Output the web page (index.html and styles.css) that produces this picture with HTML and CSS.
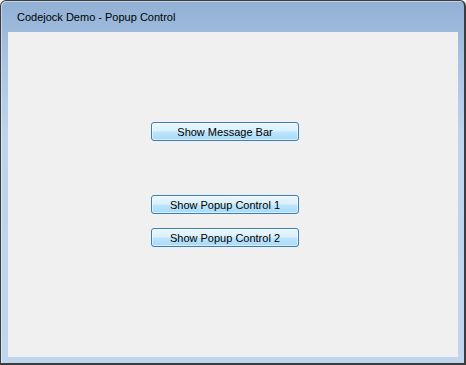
FILE: index.html
```html
<!DOCTYPE html>
<html>
<head>
<meta charset="utf-8">
<link rel="stylesheet" href="styles.css">
</head>
<body>
<div class="window">
  <div class="titlebar">Codejock Demo - Popup Control</div>
  <div class="client">
    <button class="btn btn-first">Show Message Bar</button>
    <button class="btn btn-second">Show Popup Control 1</button>
    <button class="btn btn-third">Show Popup Control 2</button>
  </div>
</div>
</body>
</html>
```
FILE: styles.css
```css
html, body {
  margin: 0;
  padding: 0;
  background: #ffffff;
}
.window {
  box-sizing: border-box;
  width: 466px;
  height: 365px;
  border-style: solid;
  border-color: #3c3c3c;
  border-width: 1px 2px 2px 1px;
  border-radius: 6px 6px 0 0;
  background: linear-gradient(to bottom, #91b0d4 0px, #a9c4e3 60px, #bcd4ed 130px, #bfd6ee 100%);
  box-shadow: inset 1px 1px 0 rgba(255,255,255,0.45);
  display: flex;
  flex-direction: column;
  padding: 0 6px 6px 7px;
}
.titlebar {
  height: 31px;
  flex: none;
  box-sizing: border-box;
  padding: 9px 0 0 9px;
  font-family: "Liberation Sans", Arial, sans-serif;
  font-size: 11px;
  line-height: 14px;
  color: #000000;
}
.client {
  flex: 1;
  background: #f0f0f0;
  display: flex;
  flex-direction: column;
  align-items: flex-start;
  padding-left: 143px;
}
.btn {
  box-sizing: border-box;
  width: 148px;
  height: 19px;
  margin: 0;
  padding: 0;
  border: 1px solid #3c7fb1;
  border-radius: 3px;
  background: linear-gradient(to bottom, #eaf6fd 0%, #d9f0fc 48%, #bee6fd 52%, #a7d9f5 100%);
  box-shadow: inset 0 0 0 1px rgba(255,255,255,0.55);
  font-family: "Liberation Sans", Arial, sans-serif;
  font-size: 11px;
  line-height: 16px;
  color: #000000;
  text-align: center;
}
.btn-first { margin-top: 90px; }
.btn-second { margin-top: 54px; }
.btn-third { margin-top: 14px; }
```
